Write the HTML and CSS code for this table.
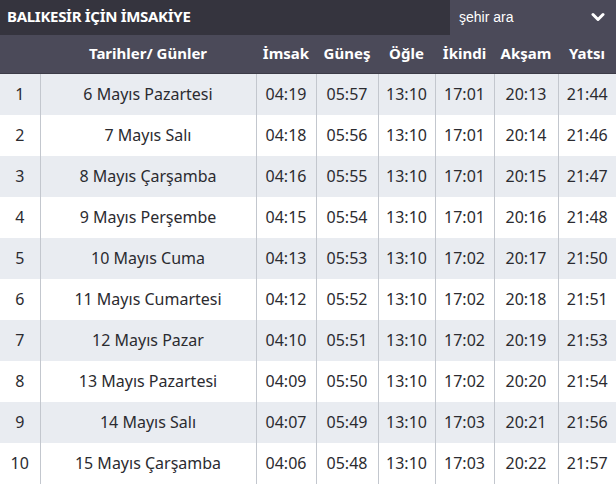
FILE: index.html
```html
<!DOCTYPE html>
<html lang="tr">
<head>
<meta charset="utf-8">
<link rel="stylesheet" href="styles.css">
</head>
<body>
<div class="page">
  <div class="topbar">
    <h1 class="title">BALIKESİR İÇİN İMSAKİYE</h1>
    <div class="select">
      <span>şehir ara</span>
      <svg class="chev" width="14" height="10" viewBox="0 0 14 10"><path d="M2 2.5 L7 7.5 L12 2.5" fill="none" stroke="#fff" stroke-width="3" stroke-linecap="round" stroke-linejoin="round"/></svg>
    </div>
  </div>
  <table class="tbl">
    <colgroup>
      <col class="c0"><col class="c1"><col class="c2"><col class="c3"><col class="c4"><col class="c5"><col class="c6"><col class="c7">
    </colgroup>
    <thead>
      <tr><th></th><th>Tarihler/ Günler</th><th>İmsak</th><th>Güneş</th><th>Öğle</th><th>İkindi</th><th>Akşam</th><th>Yatsı</th></tr>
    </thead>
    <tbody>
      <tr><td>1</td><td>6 Mayıs Pazartesi</td><td>04:19</td><td>05:57</td><td>13:10</td><td>17:01</td><td>20:13</td><td>21:44</td></tr>
      <tr><td>2</td><td>7 Mayıs Salı</td><td>04:18</td><td>05:56</td><td>13:10</td><td>17:01</td><td>20:14</td><td>21:46</td></tr>
      <tr><td>3</td><td>8 Mayıs Çarşamba</td><td>04:16</td><td>05:55</td><td>13:10</td><td>17:01</td><td>20:15</td><td>21:47</td></tr>
      <tr><td>4</td><td>9 Mayıs Perşembe</td><td>04:15</td><td>05:54</td><td>13:10</td><td>17:01</td><td>20:16</td><td>21:48</td></tr>
      <tr><td>5</td><td>10 Mayıs Cuma</td><td>04:13</td><td>05:53</td><td>13:10</td><td>17:02</td><td>20:17</td><td>21:50</td></tr>
      <tr><td>6</td><td>11 Mayıs Cumartesi</td><td>04:12</td><td>05:52</td><td>13:10</td><td>17:02</td><td>20:18</td><td>21:51</td></tr>
      <tr><td>7</td><td>12 Mayıs Pazar</td><td>04:10</td><td>05:51</td><td>13:10</td><td>17:02</td><td>20:19</td><td>21:53</td></tr>
      <tr><td>8</td><td>13 Mayıs Pazartesi</td><td>04:09</td><td>05:50</td><td>13:10</td><td>17:02</td><td>20:20</td><td>21:54</td></tr>
      <tr><td>9</td><td>14 Mayıs Salı</td><td>04:07</td><td>05:49</td><td>13:10</td><td>17:03</td><td>20:21</td><td>21:56</td></tr>
      <tr><td>10</td><td>15 Mayıs Çarşamba</td><td>04:06</td><td>05:48</td><td>13:10</td><td>17:03</td><td>20:22</td><td>21:57</td></tr>
    </tbody>
  </table>
</div>
</body>
</html>
```
FILE: styles.css
```css
html, body {
  margin: 0;
  padding: 0;
  background: #ffffff;
}
.page {
  width: 616px;
  height: 486px;
  overflow: hidden;
  font-family: "Noto Sans", "Open Sans", sans-serif;
  color: #2b2b30;
}
.topbar {
  display: flex;
  height: 35px;
  background: #35343e;
}
.title {
  flex: 1;
  margin: 0;
  padding-left: 7px;
  font-size: 15px;
  font-weight: 700;
  line-height: 33px;
  color: #ffffff;
  letter-spacing: -0.3px;
}
.select {
  width: 166px;
  box-sizing: border-box;
  background: #4b4a59;
  display: flex;
  align-items: center;
  justify-content: space-between;
  padding: 0 11px 2px 9px;
  color: #ffffff;
  font-family: "Liberation Sans", Arial, sans-serif;
  font-size: 14px;
}
.chev { display: block; }
.tbl {
  width: 616px;
  border-collapse: collapse;
  table-layout: fixed;
}
.c0 { width: 40px; }
.c1 { width: 216px; }
.c2 { width: 60px; }
.c3 { width: 62px; }
.c4 { width: 57px; }
.c5 { width: 59px; }
.c6 { width: 64px; }
.c7 { width: 58px; }
.tbl th {
  background: #4b4a59;
  color: #ffffff;
  font-size: 15px;
  font-weight: 700;
  height: 38px;
  padding: 0 0 2px;
  text-align: center;
  white-space: nowrap;
  border-bottom: 1px solid #3c3b47;
  box-sizing: border-box;
}
.tbl td {
  height: 41px;
  padding: 0;
  text-align: center;
  font-size: 16px;
  white-space: nowrap;
  border-left: 1px solid #c3c7ce;
}
.tbl td:first-child { border-left: none; }
.tbl tbody tr:nth-child(odd) td { background: #e9ecf1; }
.tbl tbody tr:nth-child(even) td { background: #ffffff; }
```
